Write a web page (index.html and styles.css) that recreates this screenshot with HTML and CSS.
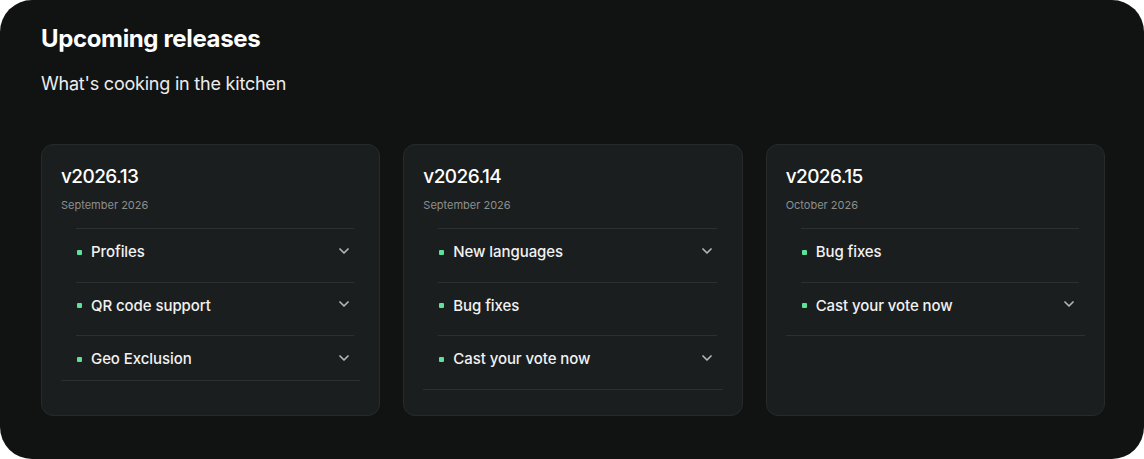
FILE: index.html
```html
<!DOCTYPE html>
<html lang="en">
<head>
<meta charset="utf-8">
<title>Upcoming releases</title>
<link rel="stylesheet" href="styles.css">
</head>
<body>
<section class="panel">
  <h1 class="panel-title">Upcoming releases</h1>
  <p class="panel-sub">What's cooking in the kitchen</p>
  <div class="cards">
    <article class="card">
      <h2 class="card-title">v2026.13</h2>
      <div class="card-date">September 2026</div>
      <ul class="list">
        <li class="item"><span class="dot"></span><span class="label">Profiles</span><svg class="chev" viewBox="0 0 10 6"><path d="M1 1l4 4 4-4"/></svg></li>
        <li class="item"><span class="dot"></span><span class="label">QR code support</span><svg class="chev" viewBox="0 0 10 6"><path d="M1 1l4 4 4-4"/></svg></li>
        <li class="item item--tight"><span class="dot"></span><span class="label">Geo Exclusion</span><svg class="chev" viewBox="0 0 10 6"><path d="M1 1l4 4 4-4"/></svg></li>
      </ul>
    </article>
    <article class="card">
      <h2 class="card-title">v2026.14</h2>
      <div class="card-date">September 2026</div>
      <ul class="list">
        <li class="item"><span class="dot"></span><span class="label">New languages</span><svg class="chev" viewBox="0 0 10 6"><path d="M1 1l4 4 4-4"/></svg></li>
        <li class="item"><span class="dot"></span><span class="label">Bug fixes</span></li>
        <li class="item"><span class="dot"></span><span class="label">Cast your vote now</span><svg class="chev" viewBox="0 0 10 6"><path d="M1 1l4 4 4-4"/></svg></li>
      </ul>
    </article>
    <article class="card">
      <h2 class="card-title">v2026.15</h2>
      <div class="card-date">October 2026</div>
      <ul class="list">
        <li class="item"><span class="dot"></span><span class="label">Bug fixes</span></li>
        <li class="item"><span class="dot"></span><span class="label">Cast your vote now</span><svg class="chev" viewBox="0 0 10 6"><path d="M1 1l4 4 4-4"/></svg></li>
      </ul>
    </article>
  </div>
</section>
</body>
</html>
```
FILE: styles.css
```css
* { box-sizing: border-box; }
html, body { margin: 0; padding: 0; background: #ffffff; }
body { font-family: "Inter", "Noto Sans", sans-serif; }

.panel {
  width: 1144px;
  height: 459px;
  background: #111312;
  border-radius: 32px;
  padding: 24px 39px 43px 41px;
  display: flex;
  flex-direction: column;
}

.panel-title {
  margin: 0;
  font-size: 24px;
  line-height: 30px;
  font-weight: 700;
  letter-spacing: -0.015em;
  color: #ffffff;
}

.panel-sub {
  margin: 18px 0 0;
  font-size: 18px;
  line-height: 24px;
  font-weight: 400;
  color: #ededed;
  letter-spacing: -0.012em;
}

.cards {
  margin-top: 48px;
  flex: 1;
  min-height: 0;
  display: grid;
  grid-template-columns: repeat(3, 1fr);
  gap: 23px;
}

.card {
  background: #1b1e1e;
  border: 1px solid #262a2a;
  border-radius: 12px;
  padding: 20px 19px 24px 19px;
  display: flex;
  flex-direction: column;
}

.card-title {
  margin: 0;
  font-size: 19px;
  line-height: 24px;
  font-weight: 500;
  letter-spacing: -0.03em;
  color: #ffffff;
}

.card-date {
  margin-top: 9px;
  font-size: 11px;
  line-height: 14px;
  color: #8c8f8f;
}

.list {
  list-style: none;
  margin: 16px 0 0;
  padding: 0;
  border-bottom: 1px solid #2c3030;
}

.item {
  display: flex;
  align-items: center;
  margin: 0 6px 0 15px;
  border-top: 1px solid #2c3030;
  padding: 13px 5px 19.5px 1px;
  font-size: 15px;
  line-height: 20px;
  font-weight: 500;
  color: #f2f2f2;
}

.item--tight { padding-bottom: 11px; }

.dot {
  width: 5px;
  height: 5px;
  border-radius: 1px;
  background: #5de29c;
  flex: none;
  margin-right: 9px;
}

.label { flex: 1; letter-spacing: -0.005em; }

.chev {
  width: 10px;
  height: 6px;
  flex: none;
  margin-bottom: 3px;
  fill: none;
  stroke: #b4b6b6;
  stroke-width: 1.7;
  stroke-linecap: round;
  stroke-linejoin: round;
}
```
